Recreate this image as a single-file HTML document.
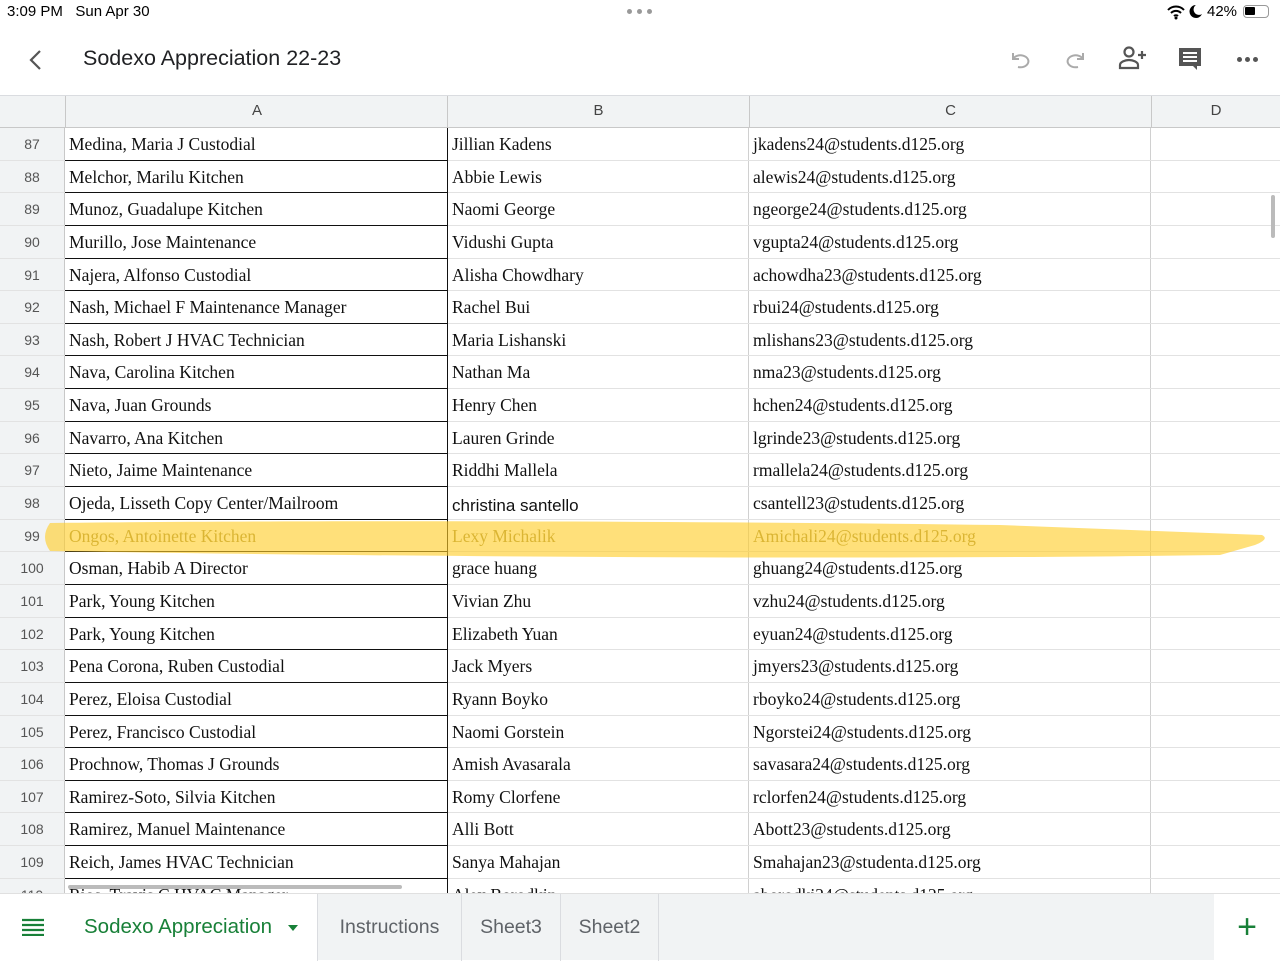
<!DOCTYPE html>
<html><head><meta charset="utf-8"><style>
*{margin:0;padding:0;box-sizing:border-box}
body{width:1280px;height:960px;overflow:hidden;background:#fff;font-family:"Liberation Sans",sans-serif;position:relative}
.status{position:absolute;top:3px;font-size:15px;color:#000}
.title{position:absolute;left:83px;top:46px;font-size:21.5px;color:#202124}
.hdr{position:absolute;top:95px;left:0;width:1280px;height:33px;background:#f1f3f4;border-top:1px solid #dadce0;border-bottom:1px solid #c8c8c8}
.hdr div{position:absolute;top:0;height:32px;line-height:30px;text-align:center;font-size:15px;color:#444;border-left:1px solid #c8c8c8}
.grid{position:absolute;top:128px;left:0;width:1280px}
.row{height:32.65px;position:relative;border-bottom:1px solid #e2e2e2}
.row div{position:absolute;top:0;height:100%;line-height:32px;font-family:"Liberation Serif",serif;font-size:17.5px;color:#111;white-space:nowrap;overflow:hidden;padding-left:4px}
.rn{left:0;width:65px;background:#f1f3f4;text-align:center;padding-left:0!important;font-family:"Liberation Sans",sans-serif!important;font-size:14px!important;color:#555!important;border-right:1px solid #c8c8c8}
.a{left:65px;width:383px;border-right:1px solid #111;border-bottom:1px solid #111;height:calc(100% + 1px)!important}
.b{left:448px;width:301px;border-right:1px solid #d0d0d0}
.c{left:749px;width:402px;border-right:1px solid #d0d0d0}
.tabs{position:absolute;top:893px;left:0;width:1280px;height:67px;background:#f1f3f4;border-top:1px solid #e0e0e0}
.tab{position:absolute;top:0;height:67px;line-height:66px;font-size:19.5px;color:#5f6368;text-align:center;border-right:1px solid #dadce0}
</style></head><body>
<div class="status" style="left:7px">3:09 PM&nbsp;&nbsp; Sun Apr 30</div>
<div style="position:absolute;left:627px;top:9px;width:26px;height:6px">
<span style="position:absolute;left:0;width:5px;height:5px;border-radius:50%;background:#999"></span><span style="position:absolute;left:10px;width:5px;height:5px;border-radius:50%;background:#999"></span><span style="position:absolute;left:20px;width:5px;height:5px;border-radius:50%;background:#999"></span></div>
<svg style="position:absolute;left:1166px;top:4px" width="20" height="16" viewBox="0 0 20 16"><path d="M2 6a11 11 0 0 1 16 0M5 9a7 7 0 0 1 10 0M8 12a3 3 0 0 1 4 0" stroke="#000" stroke-width="2" fill="none"/><circle cx="10" cy="14" r="1.5"/></svg>
<svg style="position:absolute;left:1189px;top:4px" width="14" height="15" viewBox="0 0 14 15"><path d="M7 1a6.5 6.5 0 1 0 6 9 5 5 0 0 1-6-9z" fill="#000"/></svg>
<div class="status" style="left:1207px">42%</div>
<div style="position:absolute;left:1243px;top:5px;width:26px;height:13px;border:1.5px solid #999;border-radius:4px"><div style="position:absolute;left:1px;top:1px;width:10px;height:8px;background:#000;border-radius:1px"></div></div>
<svg style="position:absolute;left:26px;top:48px" width="20" height="24"><path d="M14 3L5 12l9 9" stroke="#555" stroke-width="2.2" fill="none"/></svg>
<div class="title">Sodexo Appreciation 22-23</div>
<svg style="position:absolute;left:1007px;top:47px" width="26" height="24" viewBox="0 0 26 24"><path d="M6 6v6h6M6 12a8 6 0 1 1 5 8" stroke="#aaa" stroke-width="2" fill="none"/></svg>
<svg style="position:absolute;left:1063px;top:47px" width="26" height="24" viewBox="0 0 26 24"><path d="M20 6v6h-6M20 12a8 6 0 1 0-5 8" stroke="#aaa" stroke-width="2" fill="none"/></svg>
<svg style="position:absolute;left:1118px;top:45px" width="30" height="26" viewBox="0 0 30 26"><circle cx="11" cy="7" r="4.5" stroke="#555" stroke-width="2.2" fill="none"/><path d="M2 23v-3c0-3 5-5 9-5s9 2 9 5v3z" stroke="#555" stroke-width="2.2" fill="none"/><path d="M20 10h8M24 6v8" stroke="#555" stroke-width="2.2"/></svg>
<svg style="position:absolute;left:1177px;top:46px" width="26" height="26" viewBox="0 0 26 26"><path d="M2 2h22v18h-4v4l-4-4H2z" fill="#555"/><path d="M6 7h14M6 11h14M6 15h14" stroke="#fff" stroke-width="2"/></svg>
<div style="position:absolute;left:1237px;top:57px;width:22px;height:5px"><span style="position:absolute;left:0;width:5px;height:5px;border-radius:50%;background:#555"></span><span style="position:absolute;left:8px;width:5px;height:5px;border-radius:50%;background:#555"></span><span style="position:absolute;left:16px;width:5px;height:5px;border-radius:50%;background:#555"></span></div>
<div class="hdr"><div style="left:65px;width:383px">A</div><div style="left:447px;width:302px">B</div><div style="left:749px;width:402px">C</div><div style="left:1151px;width:129px">D</div></div>
<div class="grid">
<div class="row"><div class="rn">87</div><div class="a">Medina, Maria J Custodial</div><div class="b">Jillian Kadens</div><div class="c">jkadens24@students.d125.org</div></div>
<div class="row"><div class="rn">88</div><div class="a">Melchor, Marilu Kitchen</div><div class="b">Abbie Lewis</div><div class="c">alewis24@students.d125.org</div></div>
<div class="row"><div class="rn">89</div><div class="a">Munoz, Guadalupe Kitchen</div><div class="b">Naomi George</div><div class="c">ngeorge24@students.d125.org</div></div>
<div class="row"><div class="rn">90</div><div class="a">Murillo, Jose Maintenance</div><div class="b">Vidushi Gupta</div><div class="c">vgupta24@students.d125.org</div></div>
<div class="row"><div class="rn">91</div><div class="a">Najera, Alfonso Custodial</div><div class="b">Alisha Chowdhary</div><div class="c">achowdha23@students.d125.org</div></div>
<div class="row"><div class="rn">92</div><div class="a">Nash, Michael F Maintenance Manager</div><div class="b">Rachel Bui</div><div class="c">rbui24@students.d125.org</div></div>
<div class="row"><div class="rn">93</div><div class="a">Nash, Robert J HVAC Technician</div><div class="b">Maria Lishanski</div><div class="c">mlishans23@students.d125.org</div></div>
<div class="row"><div class="rn">94</div><div class="a">Nava, Carolina Kitchen</div><div class="b">Nathan Ma</div><div class="c">nma23@students.d125.org</div></div>
<div class="row"><div class="rn">95</div><div class="a">Nava, Juan Grounds</div><div class="b">Henry Chen</div><div class="c">hchen24@students.d125.org</div></div>
<div class="row"><div class="rn">96</div><div class="a">Navarro, Ana Kitchen</div><div class="b">Lauren Grinde</div><div class="c">lgrinde23@students.d125.org</div></div>
<div class="row"><div class="rn">97</div><div class="a">Nieto, Jaime Maintenance</div><div class="b">Riddhi Mallela</div><div class="c">rmallela24@students.d125.org</div></div>
<div class="row"><div class="rn">98</div><div class="a">Ojeda, Lisseth Copy Center/Mailroom</div><div class="b" style="font-family:'Liberation Sans',sans-serif;font-size:17px;line-height:38px">christina santello</div><div class="c">csantell23@students.d125.org</div></div>
<div class="row"><div class="rn">99</div><div class="a" style="color:#a08f45">Ongos, Antoinette Kitchen</div><div class="b" style="color:#a08f45">Lexy Michalik</div><div class="c" style="color:#a08f45">Amichali24@students.d125.org</div></div>
<div class="row"><div class="rn">100</div><div class="a">Osman, Habib A Director</div><div class="b">grace huang</div><div class="c">ghuang24@students.d125.org</div></div>
<div class="row"><div class="rn">101</div><div class="a">Park, Young Kitchen</div><div class="b">Vivian Zhu</div><div class="c">vzhu24@students.d125.org</div></div>
<div class="row"><div class="rn">102</div><div class="a">Park, Young Kitchen</div><div class="b">Elizabeth Yuan</div><div class="c">eyuan24@students.d125.org</div></div>
<div class="row"><div class="rn">103</div><div class="a">Pena Corona, Ruben Custodial</div><div class="b">Jack Myers</div><div class="c">jmyers23@students.d125.org</div></div>
<div class="row"><div class="rn">104</div><div class="a">Perez, Eloisa Custodial</div><div class="b">Ryann Boyko</div><div class="c">rboyko24@students.d125.org</div></div>
<div class="row"><div class="rn">105</div><div class="a">Perez, Francisco Custodial</div><div class="b">Naomi Gorstein</div><div class="c">Ngorstei24@students.d125.org</div></div>
<div class="row"><div class="rn">106</div><div class="a">Prochnow, Thomas J Grounds</div><div class="b">Amish Avasarala</div><div class="c">savasara24@students.d125.org</div></div>
<div class="row"><div class="rn">107</div><div class="a">Ramirez-Soto, Silvia Kitchen</div><div class="b">Romy Clorfene</div><div class="c">rclorfen24@students.d125.org</div></div>
<div class="row"><div class="rn">108</div><div class="a">Ramirez, Manuel Maintenance</div><div class="b">Alli Bott</div><div class="c">Abott23@students.d125.org</div></div>
<div class="row"><div class="rn">109</div><div class="a">Reich, James HVAC Technician</div><div class="b">Sanya Mahajan</div><div class="c">Smahajan23@studenta.d125.org</div></div>
<div class="row"><div class="rn">110</div><div class="a">Rios, Travis C HVAC Manager</div><div class="b">Alex Borodkin</div><div class="c">aborodki24@students.d125.org</div></div>
</div>
<svg style="position:absolute;left:0;top:515px" width="1280" height="50"><path d="M50 8C300 5 700 6 1000 10L1262 20Q1270 24 1255 30L1220 40C900 45 400 42 50 36Q40 22 50 8z" fill="rgba(255,205,40,0.62)"/></svg>
<div style="position:absolute;left:1271px;top:195px;width:4px;height:43px;background:#bbb;border-radius:2px"></div>
<div style="position:absolute;left:68px;top:885px;width:334px;height:4px;background:#bbb;border-radius:2px"></div>
<div class="tabs">
<div class="tab" style="left:0;width:66px;background:#fff;border-right:none"><svg style="margin-top:24px" width="22" height="18"><path d="M0 2h22M0 7h22M0 12h22M0 17h22" stroke="#188038" stroke-width="2.2"/></svg></div>
<div class="tab" style="left:66px;width:252px;background:#fff;color:#188038;text-align:left;padding-left:18px;font-size:20.5px">Sodexo Appreciation<span style="position:absolute;left:222px;top:31px;border:5px solid transparent;border-top:6px solid #188038"></span></div>
<div class="tab" style="left:318px;width:144px">Instructions</div>
<div class="tab" style="left:462px;width:99px">Sheet3</div>
<div class="tab" style="left:561px;width:98px">Sheet2</div>
<div class="tab" style="left:1214px;width:66px;background:#fff;border:none;color:#188038;font-size:34px;font-weight:300">+</div>
</div>
</body></html>
